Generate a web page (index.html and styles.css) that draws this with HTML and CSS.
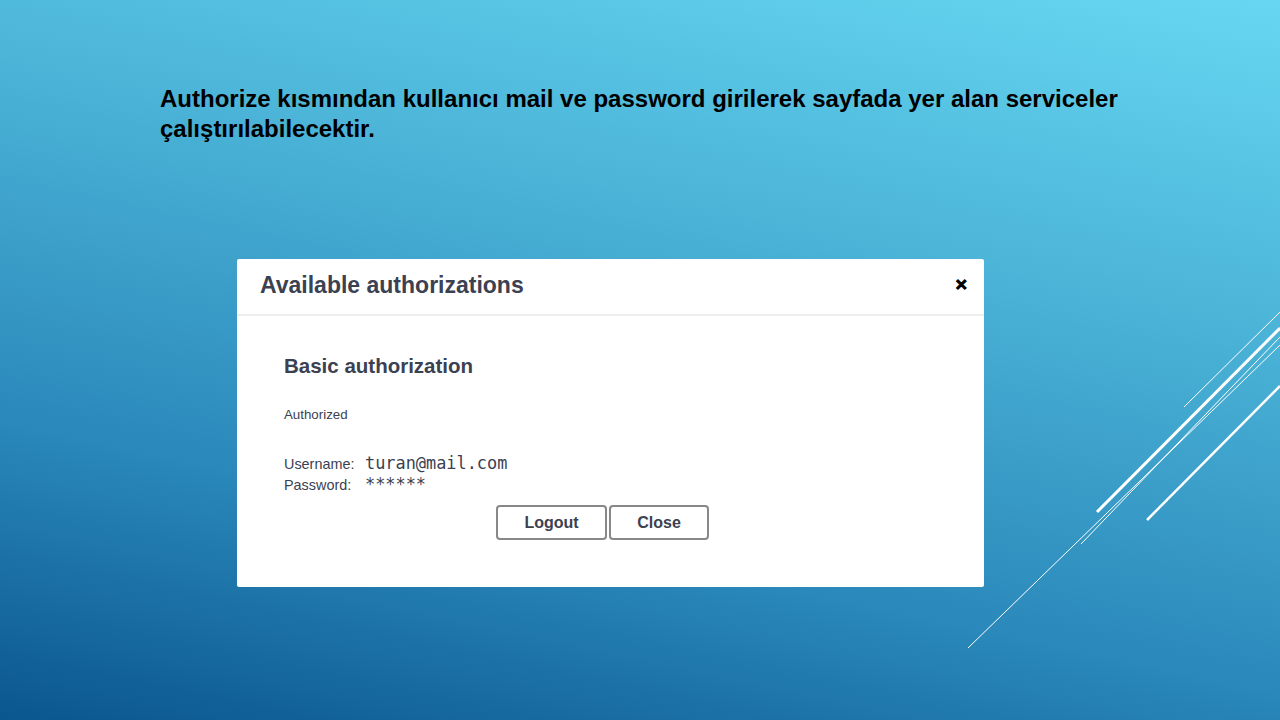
FILE: index.html
```html
<!DOCTYPE html>
<html lang="tr">
<head>
<meta charset="utf-8">
<title>Authorize</title>
<link rel="stylesheet" href="styles.css">
</head>
<body>
<div class="slide">
  <svg class="deco" width="1280" height="720" viewBox="0 0 1280 720">
    <line x1="1280" y1="312" x2="1184" y2="407" stroke="#fff" stroke-width="1"/>
    <line x1="1280" y1="328" x2="1097" y2="512" stroke="#fff" stroke-width="3"/>
    <line x1="1280" y1="337" x2="1081" y2="544" stroke="#fff" stroke-width="1"/>
    <line x1="1280" y1="345" x2="968" y2="648" stroke="#fff" stroke-width="1"/>
    <line x1="1280" y1="386" x2="1147" y2="520" stroke="#fff" stroke-width="2.5"/>
  </svg>
  <p class="lead">Authorize kısmından kullanıcı mail ve password girilerek sayfada yer alan serviceler çalıştırılabilecektir.</p>
  <div class="dialog">
    <div class="dialog-head">
      <h3 class="dialog-title">Available authorizations</h3>
      <span class="close">✕</span>
    </div>
    <div class="dialog-body">
      <h4 class="auth-title">Basic authorization</h4>
      <div class="status">Authorized</div>
      <div class="creds">
        <div class="row"><span class="lbl">Username:</span><code class="val">turan@mail.com</code></div>
        <div class="row"><span class="lbl">Password:</span><code class="val">******</code></div>
      </div>
      <div class="actions">
        <button class="btn btn-logout">Logout</button>
        <button class="btn btn-close">Close</button>
      </div>
    </div>
  </div>
</div>
</body>
</html>
```

FILE: styles.css
```css
html, body {
  margin: 0;
  padding: 0;
}
body {
  width: 1280px;
  height: 720px;
  overflow: hidden;
}
.slide {
  position: relative;
  width: 1280px;
  height: 720px;
  box-sizing: border-box;
  padding: 84px 0 0 160px;
  background: linear-gradient(192deg, #66d7f2 0%, #4ab2d6 35%, #2a88ba 70%, #0a568e 100%);
  font-family: "Liberation Sans", Arial, sans-serif;
}
.deco {
  position: absolute;
  left: 0;
  top: 0;
}
.lead {
  margin: 0;
  width: 1000px;
  font-size: 24px;
  font-weight: bold;
  line-height: 30px;
  color: #000;
}
.dialog {
  position: relative;
  margin: 115px 0 0 77px;
  width: 747px;
  height: 328px;
  background: #fff;
  border-radius: 2px;
  color: #3b4151;
}
.dialog-head {
  height: 57px;
  box-sizing: border-box;
  border-bottom: 2px solid #eeeeee;
  display: flex;
  align-items: center;
  justify-content: space-between;
  padding: 0 16px 2px 23px;
}
.dialog-title {
  margin: 0;
  font-size: 23px;
  font-weight: bold;
  color: #3b4151;
}
.close {
  font-size: 15px;
  font-weight: bold;
  color: #000;
  -webkit-text-stroke: 1px #000;
  margin-top: -2px;
}
.dialog-body {
  padding: 38px 0 0 47px;
}
.auth-title {
  margin: 0;
  font-size: 20.5px;
  font-weight: bold;
  line-height: 24px;
}
.status {
  margin-top: 29px;
  font-size: 13.3px;
  line-height: 16px;
}
.creds {
  margin-top: 30px;
  font-size: 14.4px;
}
.row {
  display: flex;
  align-items: baseline;
  height: 21px;
}
.lbl {
  width: 81px;
}
.val {
  font-family: "DejaVu Sans Mono", "Liberation Mono", monospace;
  font-size: 16.9px;
}
.actions {
  display: flex;
  justify-content: center;
  gap: 2px;
  margin: 10px 0 0 -63px;
}
.btn {
  height: 35px;
  box-sizing: border-box;
  border: 2px solid #888;
  border-radius: 4px;
  background: #fff;
  font-family: "Liberation Sans", Arial, sans-serif;
  font-size: 16px;
  font-weight: bold;
  color: #3b4151;
  padding: 0;
}
.btn-logout { width: 111px; }
.btn-close { width: 100px; }
```
